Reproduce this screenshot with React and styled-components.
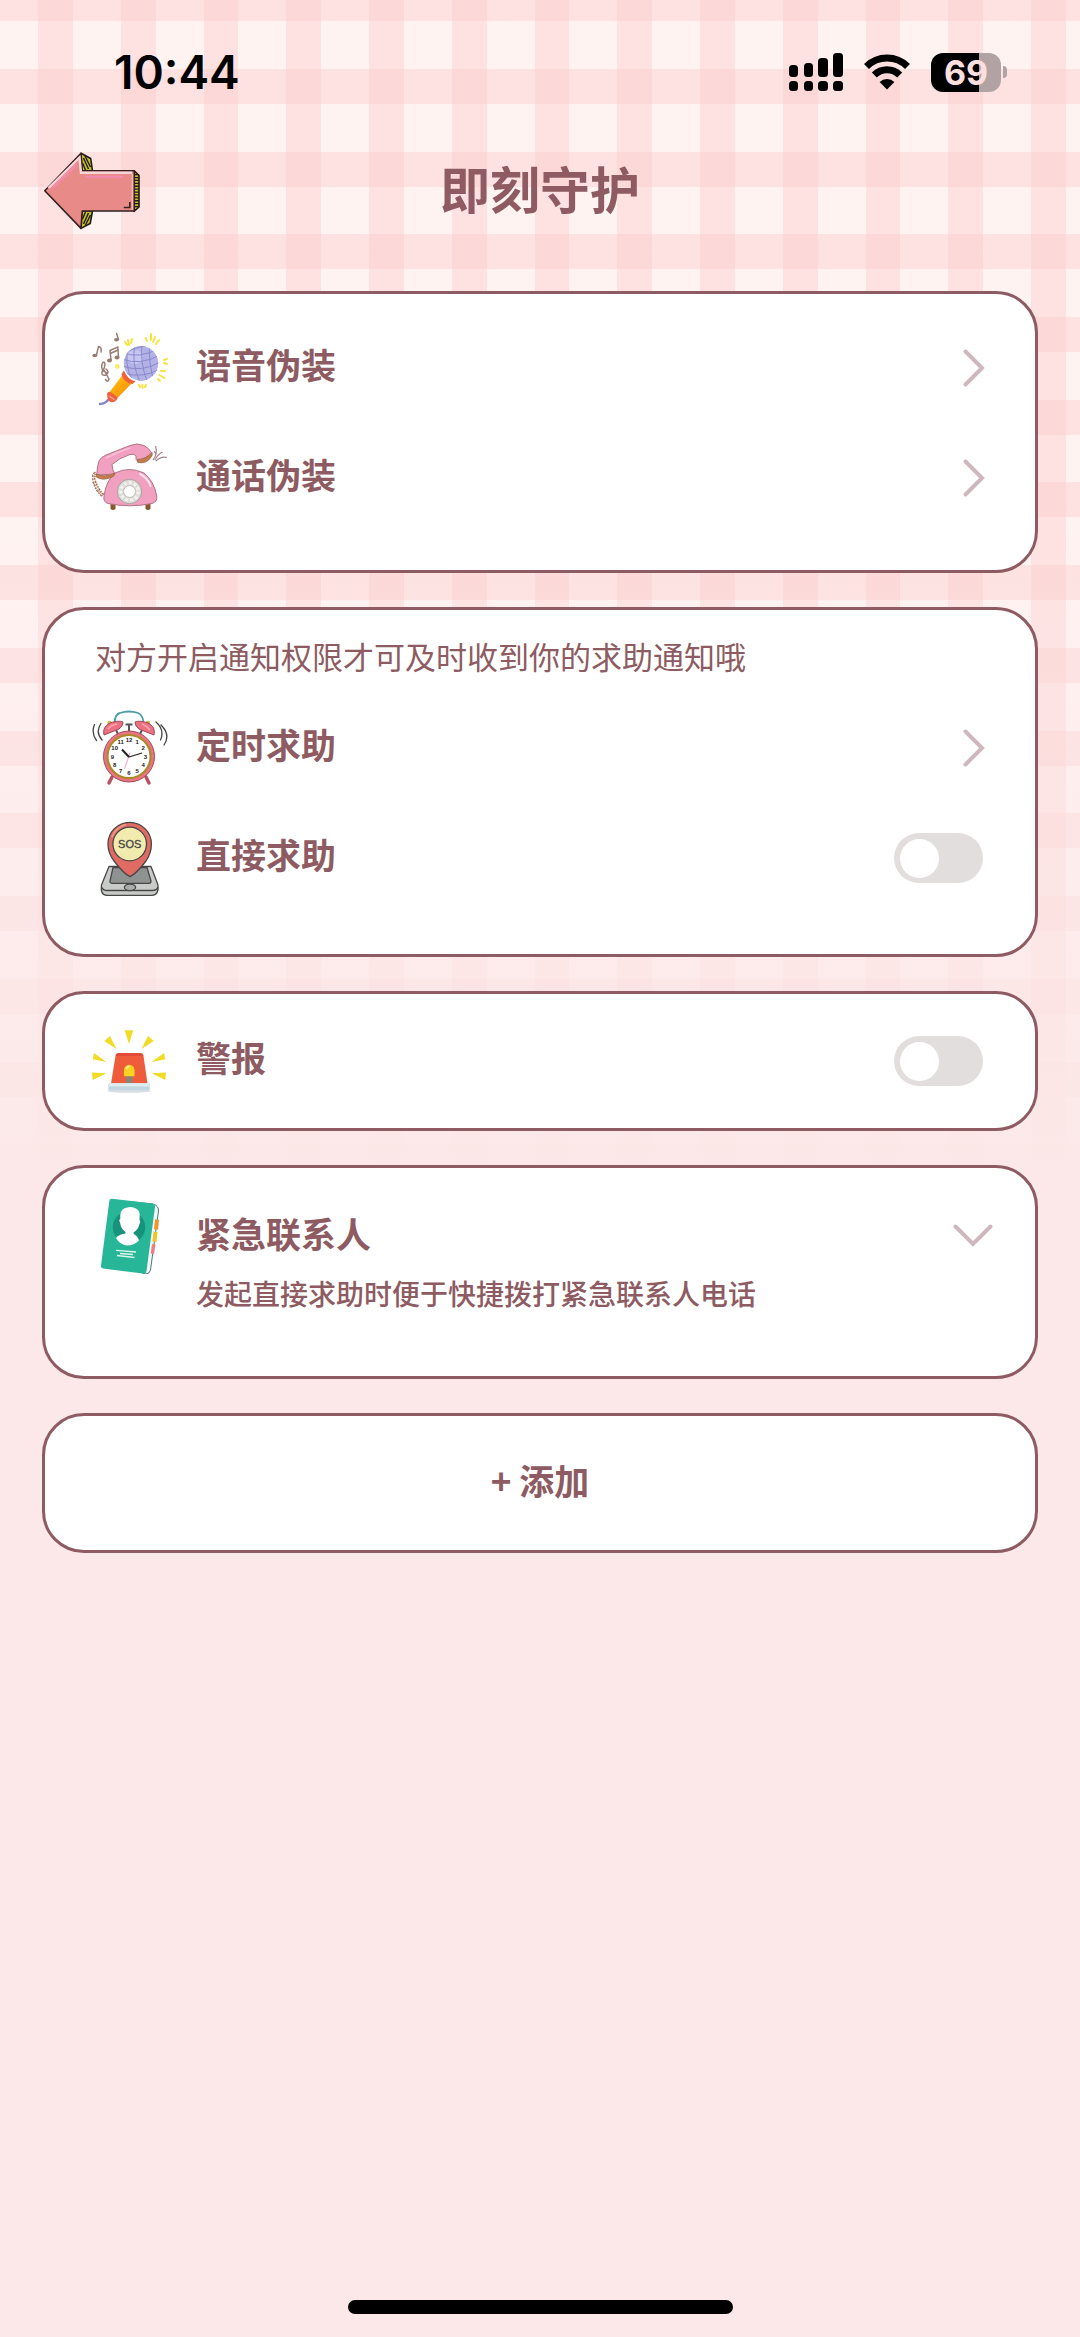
import { useState } from "react"
import styled, { createGlobalStyle, css } from "styled-components"

export default function Guard() {

    const [sos, setSos] = useState(false)
    const [alarm, setAlarm] = useState(false)

    return (
        <Page>
            <GlobalStyle />
            <StatusBar>
                <Time>10:44</Time>
                <StatusIcons>
                    <SignalIcon />
                    <WifiIcon />
                    <Battery>
                        <Level>69</Level>
                        <Nub />
                    </Battery>
                </StatusIcons>
            </StatusBar>
            <Header>
                <Back type="button" aria-label="返回"><ArrowIcon /></Back>
                <Title>即刻守护</Title>
            </Header>
            <Main>
                <Card>
                    <RowLink href="#voice">
                        <MicIcon />
                        <Name>语音伪装</Name>
                        <ChevronRight />
                    </RowLink>
                    <RowLink href="#call">
                        <PhoneIcon />
                        <Name>通话伪装</Name>
                        <ChevronRight />
                    </RowLink>
                </Card>
                <Card>
                    <Note>对方开启通知权限才可及时收到你的求助通知哦</Note>
                    <RowLink href="#timer">
                        <ClockIcon />
                        <Name>定时求助</Name>
                        <ChevronRight />
                    </RowLink>
                    <RowLabel>
                        <PinIcon />
                        <Name>直接求助</Name>
                        <Switch type="checkbox" checked={sos} onChange={e => setSos(e.target.checked)} />
                    </RowLabel>
                </Card>
                <Card $slim>
                    <RowLabel>
                        <SirenIcon />
                        <Name>警报</Name>
                        <Switch type="checkbox" checked={alarm} onChange={e => setAlarm(e.target.checked)} />
                    </RowLabel>
                </Card>
                <Card $slim>
                    <Contacts type="button">
                        <BookIcon />
                        <ContactText>
                            <ContactName>紧急联系人</ContactName>
                            <Hint>发起直接求助时便于快捷拨打紧急联系人电话</Hint>
                        </ContactText>
                        <ChevronDown />
                    </Contacts>
                </Card>
                <Add type="button">+ 添加</Add>
            </Main>
            <HomeBar />
        </Page>
    )
}

function SignalIcon() {
    return (
        <svg width="54" height="39" viewBox="0 0 54 39">
            <rect x="0" y="12" width="9" height="12" rx="3.5" />
            <rect x="15" y="10" width="9" height="14" rx="3.5" />
            <rect x="29" y="5" width="10" height="19" rx="3.5" />
            <rect x="44" y="0" width="10" height="24" rx="3.5" />
            <rect x="0" y="28" width="9" height="10" rx="3.5" />
            <rect x="15" y="28" width="9" height="10" rx="3.5" />
            <rect x="29" y="28" width="10" height="10" rx="3.5" />
            <rect x="44" y="28" width="10" height="10" rx="3.5" />
        </svg>
    )
}

function WifiIcon() {
    return (
        <svg width="46" height="36" viewBox="0 0 46 36">
            <g fill="none" stroke="#000" strokeWidth="7">
                <path d="M2.500 12.500a29 29 0 0 1 41 0" />
                <path d="M10.300 21a18 18 0 0 1 25.400 0" />
            </g>
            <path d="M15.600 28a10.500 10.500 0 0 1 14.800 0L23 35.600z" />
        </svg>
    )
}

function ArrowIcon() {
    return (
        <svg width="96" height="78" viewBox="0 0 96 78">
            <g fill="#c5c12c" stroke="#211a12" strokeWidth="1.6" strokeLinejoin="round">
                <path d="M37 1.3L46.7 6.5L48.5 19H38z" />
                <path d="M37 76.4L46.2 71.5L48.5 59H38z" />
                <path d="M90 18.7L95 23.5V55L90 59.3z" />
            </g>
            <path d="M39.5 6l5 11M41 4l5.5 11M38.5 11l3 7M39.5 72l5-11M41.5 73l5-10M38.5 67l3-7" stroke="#211a12" strokeWidth="1.4" />
            <path d="M92.6 22v34" stroke="#211a12" strokeWidth="5" strokeDasharray="1.3 1.6" />
            <path d="M.8 38.7L37 1.3L38.2 18.7H90.3V59H38.2L37 76.4z" fill="#e88b88" stroke="#33201f" strokeWidth="1.6" strokeLinejoin="round" />
            <path d="M4.5 36L35.5 5.5L37 20.8H88" fill="none" stroke="#f6d5d8" strokeWidth="2.4" />
            <path d="M9 35.5L32 13M43 24.7H78" fill="none" stroke="#f58bb5" strokeWidth="2" strokeLinecap="round" />
            <path d="M85.8 50v5.5h-6" fill="none" stroke="#33201f" strokeWidth="1.6" />
            <path d="M88.4 22v36" stroke="#f3b7b7" strokeWidth="1.4" />
        </svg>
    )
}

function MicIcon() {
    return (
        <svg width="76" height="76" viewBox="0 0 76 76">
            <defs>
                <linearGradient id="grip" x1="0" y1="0" x2="1" y2="1">
                    <stop offset="0.2" stopColor="#ffb90c" />
                    <stop offset="0.8" stopColor="#f9920b" />
                </linearGradient>
                <clipPath id="ball"><circle cx="49" cy="33.3" r="17.2" /></clipPath>
            </defs>
            <path d="M8 74q5 0 9-5" fill="none" stroke="#8484cc" strokeWidth="2.4" strokeLinecap="round" />
            <path d="M30.5 45L16.5 63.5L24 69.5L41 52z" fill="url(#grip)" />
            <path d="M15.3 66c-1-4 2-5 4-3.500l6 4.500c1 2-2 5-5 5.300c-3 0-5-3-5-6.300z" fill="#ef6040" />
            <path d="M18 66.500l4 3" stroke="#ffa48c" strokeWidth="1.500" strokeLinecap="round" />
            <path d="M32 40.500Q35 49 43.500 51.500L40.500 54Q31 52 29.500 44z" fill="#f0613b" />
            <circle cx="49" cy="33.3" r="17.2" fill="#b3b2e6" />
            <ellipse cx="43" cy="27" rx="8" ry="7" fill="#c6c6f1" />
            <g clipPath="url(#ball)" fill="none" stroke="#8b89ca" strokeWidth="1">
                <path d="M30 22Q46 30 68 18M30 29Q48 36 68 25M30 36Q50 43 68 32M32 43Q50 49 68 39M38 50Q52 53 66 46" />
                <path d="M37 15Q31 33 41 52M43 14Q39 33 48 52M50 14Q48 33 55 51M57 14Q57 33 61 50M34 22Q50 14 66 16" />
            </g>
            <g fill="none" stroke="#967d70" strokeWidth="1.500" strokeLinecap="round">
                <path d="M4.500 25L6.500 16.500Q10 17 9 22" />
                <path d="M19 30L18 20.500L25.800 17L26.500 27M18.300 23.500L26 20" />
                <path d="M24.600 3.500L26.500 9.500" />
                <path d="M15.500 43Q8 41 10 34Q12 30 13 34Q13 38 10 42Q9 46 14 45Q18 42 14 39M12 40L17 49Q16 53 13.500 49.500" />
            </g>
            <g fill="#967d70">
                <ellipse cx="2.800" cy="25.500" rx="2.500" ry="1.800" />
                <ellipse cx="17.500" cy="30.500" rx="2.500" ry="1.900" />
                <ellipse cx="25" cy="27.500" rx="2.500" ry="1.900" />
                <ellipse cx="24.500" cy="9.800" rx="2.500" ry="1.800" />
            </g>
            <g stroke="#f8e23c" strokeWidth="2" strokeLinecap="round">
                <path d="M33 12l2 3M36 10l1 5M40 9l-1 4M54 8l1 3M59 4l0 6M63 7l-2 5M67 10l-3 4M72 30l3-1M72 33l3 1M69 41l4 0M67.500 45l5 3M66 49l2 2M47 55l1 2M50.500 55v3M54 55l-1 2" />
            </g>
            <circle cx="25.300" cy="36.500" r="1.800" fill="#fff37b" stroke="#f8e23c" strokeWidth="1" />
        </svg>
    )
}

function PhoneIcon() {
    return (
        <svg width="76" height="76" viewBox="0 0 76 76">
            <path d="M4 33Q0 36 2 41T5 48T11 56" fill="none" stroke="#9d6d55" strokeWidth="4" strokeDasharray="2 1" />
            <path d="M4 33Q0 36 2 41T5 48T11 56" fill="none" stroke="#e9cdbd" strokeWidth="1.500" strokeDasharray="1.500 1.500" />
            <path d="M18.500 64h5v5q-2.500 2-5 0zM53.500 63h5v6q-2.500 2-5 0z" fill="#8c572f" />
            <path d="M23 33Q37 26 52 33Q62 41 64.800 56Q65.500 62 60 63.500Q38 68 16 63.500Q11 62 12 56Q14 41 23 33z" fill="#f1a0c0" stroke="#b27383" strokeWidth="1" />
            <path d="M48 34Q56 38 58.500 46" fill="none" stroke="#fde3ee" strokeWidth="2" strokeLinecap="round" />
            <circle cx="37.500" cy="51.500" r="12.200" fill="#dcdbd8" stroke="#a9a3a3" strokeWidth="1" />
            <circle cx="37.500" cy="51.500" r="8.700" fill="none" stroke="#f2f2f0" strokeWidth="3.200" strokeDasharray="3 2" />
            <circle cx="37.500" cy="51.500" r="6" fill="#fff" stroke="#c0bcba" strokeWidth="1" />
            <path d="M4.800 35Q5 26 7 21Q9 17 14 15L38 5.500Q45 2.500 52 5.500Q57 8 60 13.500L46.500 22Q43 20 44 16Q43 13.500 38 14.500Q27 18 20 24.500Q20 29 22.800 34z" fill="#f1a0c0" stroke="#b27383" strokeWidth="1" />
            <path d="M4.500 34Q13 38 23 33Q23 36 19 37.500Q10 41 4.300 37z" fill="#c47c4d" stroke="#9c6547" strokeWidth=".8" />
            <path d="M60 12.500Q61 15 58.500 18Q54 24 46 22.500Q45 21 45.500 19.500Q55 19 60 12.500z" fill="#c47c4d" stroke="#9c6547" strokeWidth=".8" />
            <path d="M14 18Q25 12 38 8" stroke="#f8c1d7" strokeWidth="1.500" fill="none" />
            <path d="M61 20Q66 14 63.500 6M63 20Q66 14 70.500 12M64 21Q69 16 75 17.500M64 14l-2-3" fill="none" stroke="#a6848d" strokeWidth="1.200" />
        </svg>
    )
}

// one entry per hour, starting at 12
const hours = [12, 1, 2, 3, 4, 5, 6, 7, 8, 9, 10, 11]

function ClockIcon() {
    return (
        <svg width="76" height="76" viewBox="0 0 76 76">
            <path d="M22.500 13Q23 4 28 3Q37 0 46 3Q51 5 51.500 13" fill="none" stroke="#4b9da6" strokeWidth="1.800" />
            <path d="M20 67l-3 6M54 67l3 6" stroke="#b55363" strokeWidth="3.500" strokeLinecap="round" />
            <path d="M33.500 14.500h7M37 15v7M24 20l2 4M50 20l-2 4" stroke="#555" strokeWidth="2" />
            <circle cx="17.500" cy="13" r="2.200" fill="#c6b63e" />
            <circle cx="56" cy="13" r="2.200" fill="#c6b63e" />
            <path d="M12 25Q10 17 18 13Q26 10 31 12Q31 16 27 19z" fill="#ee7182" stroke="#9f4756" strokeWidth="1" />
            <path d="M62 25Q64 17 56 13Q48 10 43 12Q43 16 47 19z" fill="#ee7182" stroke="#9f4756" strokeWidth="1" />
            <path d="M16 19Q19 15 25 14M50 14Q55 16 58 20" fill="none" stroke="#f9a3ad" strokeWidth="1.500" />
            <circle cx="37" cy="46.500" r="25.500" fill="#e87580" stroke="#a54b58" strokeWidth="1" />
            <circle cx="37" cy="46.500" r="21.500" fill="#fff" stroke="#a98a26" strokeWidth="2" />
            <ClockNumbers>
                {hours.map((hour, i) => (
                    <text
                        key={hour}
                        x={37 + 16.5 * Math.sin(i * Math.PI / 6)}
                        y={48.5 - 16.5 * Math.cos(i * Math.PI / 6)}
                    >{hour}</text>
                ))}
            </ClockNumbers>
            <path d="M38 43L32.500 59" stroke="#f5a2bf" strokeWidth="1" />
            <path d="M37 47L30 39.500" stroke="#222" strokeWidth="2" />
            <path d="M37 47L50 43" stroke="#222" strokeWidth="1.200" />
            <g fill="none" stroke="#444" strokeWidth="1.300" strokeLinecap="round">
                <path d="M2.500 14.500Q-1 23 4.500 30.500M9 13.500Q3 22 10 30" />
                <path d="M64 12Q73 20 68.500 30M69 15Q79 25 72 35" />
            </g>
        </svg>
    )
}

function PinIcon() {
    return (
        <svg width="76" height="76" viewBox="0 0 76 76">
            <g stroke="#474747" strokeWidth="1.300" strokeLinejoin="round">
                <path d="M17 46.500H59L66 65Q67 75 60 75.300H15Q8 75 9.500 65z" fill="#c9cbc9" />
                <path d="M21 47.500H55L59 61Q59 63.300 57 63.300H20Q17.500 63 18 61z" fill="#8e9290" />
                <path d="M9.500 67Q11 70.500 15 70.500H60Q65 70.500 66 67" fill="none" />
                <ellipse cx="38" cy="67.300" rx="5.600" ry="3.300" fill="#aaadab" />
                <path d="M38 56.700Q32 54 22 41Q16 33 16 24A21.700 21.700 0 0 1 59.400 24Q59.400 33 54 41Q44 54 38 56.700z" fill="#e16b62" />
                <circle cx="37.700" cy="24" r="16.800" fill="#f1ebad" />
            </g>
            <path d="M20 17Q24 7 34 4.500" fill="none" stroke="#f09a8f" strokeWidth="1.500" />
            <SosText x="37.7" y="28">SOS</SosText>
        </svg>
    )
}

function SirenIcon() {
    return (
        <svg width="76" height="76" viewBox="0 0 76 76">
            <g fill="#f1db25">
                <path d="M32.700 7.300h8.600L37 21zM12.300 18L18 13L24.500 26zM61.700 18L56 13L49.500 26z" />
                <path d="M2 30L.7 36.300L14.500 39zM72 30L73.300 36.300L59.500 39zM0 49.500L.7 57L14.500 50.300zM74 49.500L73.300 57L59.500 50.300z" />
            </g>
            <ellipse cx="37" cy="68" rx="22" ry="1.800" fill="#d9dfe2" />
            <path d="M27.500 30H47.500Q51 30 51.500 33L55.500 60.500H19L23.500 33Q24 30 27.500 30z" fill="#ee5c3c" />
            <path d="M27.500 30H47.500Q51 30 51.500 33H23.500Q24 30 27.500 30z" fill="#e04c38" />
            <rect x="34" y="52" width="6.500" height="8.500" fill="#8b8377" />
            <path d="M32 53.300V47a5 5 0 0 1 10.500 0v6.300z" fill="#f8d421" />
            <path d="M34.500 46a3 3 0 0 1 3-2.500" stroke="#fff3a8" strokeWidth="1.300" fill="none" />
            <rect x="16.300" y="60.300" width="41.400" height="7" rx="1" fill="#c2d7e0" />
            <rect x="17" y="60.300" width="40" height="3" fill="#e1edf1" />
        </svg>
    )
}

function BookIcon() {
    return (
        <svg width="76" height="76" viewBox="0 0 76 76">
            <path d="M20 2L61 6Q67 8 66.500 13L58.500 72Q57.500 76 54 76L50 75z" fill="#f4f7f6" stroke="#3f7f73" strokeWidth="1" />
            <path d="M63 21.300l4 .5l-1 10l-4-.5z" fill="#f0952a" />
            <path d="M61.500 33.500l4 .5l-1 10l-4-.5z" fill="#f3c423" />
            <path d="M60 46l3.500 .5l-1.500 9.500l-3.300-.5z" fill="#ef7d86" />
            <path d="M20 .8L60.500 5.500Q63.500 6 63 9L54.500 73Q54 76 51 75.600L11 70.600Q8.500 70 9 67.500L17.300 3Q17.600 .6 20 .8z" fill="#27b698" />
            <circle cx="37" cy="29.300" r="16.200" fill="#18937b" />
            <path d="M38 9Q46 9.500 47.500 15Q48 18 47.500 22Q49 23 47.500 26Q46 32 41.500 34.500V38H33.500V34Q29 31 28 24.500Q26.500 22 28.300 21Q27.500 12 33 10z" fill="#fff" />
            <path d="M24 40Q27 36 34 35.500H41Q46 38 47 42.500Q42 47.500 35 47.500Q28 47 24 40z" fill="#fff" />
            <path d="M24 52.300L44 54M28 55.500L41 56.500M25 57.500L42.500 59.500" stroke="#dff5ef" strokeWidth="1.300" />
        </svg>
    )
}

function ChevronRight() {
    return (
        <Chevron viewBox="0 0 40 40">
            <path d="M12.500 3.500L29 20L12.500 36.500" />
        </Chevron>
    )
}

function ChevronDown() {
    return (
        <Chevron viewBox="0 0 40 40">
            <path d="M2.500 10.500L20 28L37.500 10.500" />
        </Chevron>
    )
}

const ink = "#8d5b61"

const GlobalStyle = createGlobalStyle`
    *{
        box-sizing: border-box;
    }
    body{
        margin: 0;
        background-color: #fce8e8;
        color: ${ink};
        font-family: 'Noto Sans CJK SC', sans-serif;
    }
    button{
        font-family: inherit;
        color: inherit;
        cursor: pointer;
    }
    svg{
        flex-shrink: 0;
        display: block;
    }
`
const Page = styled.div`
    min-height: 100vh;
    display: flex;
    flex-direction: column;
    background:
        linear-gradient(transparent 500px, #fce8e8 1170px),
        repeating-linear-gradient(90deg, transparent 0 3.54vw, #fbc8c866 3.54vw 6.76vw, transparent 6.76vw 7.66vw),
        repeating-linear-gradient(#fbc8c866 0 1.95vw, transparent 1.95vw 6.37vw, #fbc8c866 6.37vw 7.66vw),
        #fff3f2;
`
const StatusBar = styled.div`
    height: 144px;
    padding: 0 73px 0 114px;
    display: flex;
    align-items: center;
    justify-content: space-between;
    color: #000;
    font-family: Inter, sans-serif;
`
const Time = styled.span`
    font-size: 46px;
    font-weight: 600;
`
const StatusIcons = styled.div`
    display: flex;
    align-items: center;
    gap: 21px;
`
const Battery = styled.div`
    display: flex;
    align-items: center;
    gap: 2px;
`
const Level = styled.span`
    width: 70px;
    height: 39px;
    border-radius: 12px;
    background: linear-gradient(90deg, #000 69%, #b1a3a3 69%);
    color: #fddfdf;
    font-size: 34px;
    font-weight: 700;
    line-height: 39px;
    text-align: center;
`
const Nub = styled.span`
    width: 4px;
    height: 12px;
    border-radius: 0 6px 6px 0;
    background-color: #b1a3a3;
`
const Header = styled.header`
    height: 94px;
    padding: 0 44px;
    display: grid;
    grid-template-columns: 96px 1fr 96px;
    align-items: center;
`
const Back = styled.button`
    padding: 0;
    border: none;
    background: none;
`
const Title = styled.h1`
    margin: 0;
    padding-bottom: 8px;
    font-size: 50px;
    font-weight: 700;
    line-height: 72px;
    text-align: center;
`
const Main = styled.main`
    padding: 53px 42px 34px;
    display: flex;
    flex-direction: column;
    gap: 34px;
`
const box = css`
    border: 3px solid ${ink};
    border-radius: 42px;
    background-color: #fff;
`
const Card = styled.section`
    ${box}
    padding: ${props => props.$slim ? "12px 42px 12px 47px" : "19px 42px 37px 47px"};
`
const row = css`
    height: 110px;
    display: flex;
    align-items: center;
    gap: 28px;
    color: inherit;
    text-decoration: none;
    cursor: pointer;
`
const RowLink = styled.a`
    ${row}
`
const RowLabel = styled.label`
    ${row}
`
const Name = styled.span`
    flex: 1;
    padding-bottom: 8px;
    font-size: 35px;
    font-weight: 700;
    line-height: 50px;
`
const Note = styled.p`
    margin: 0;
    padding: 2px 0 12px 3px;
    font-size: 31px;
    font-weight: 400;
    line-height: 50px;
    & ~ ${RowLabel}{
        margin-bottom: 4px;
    }
`
const Chevron = styled.svg`
    width: 40px;
    height: 40px;
    fill: none;
    stroke: #ceb8be;
    stroke-width: 4px;
    stroke-linecap: round;
`
const Switch = styled.input`
    appearance: none;
    width: 89px;
    height: 50px;
    margin: 0 10px 0 0;
    padding: 0 6px;
    display: flex;
    align-items: center;
    border-radius: 25px;
    background-color: #e2dede;
    cursor: pointer;
    &::before{
        content: "";
        width: 39px;
        height: 39px;
        border-radius: 50%;
        background-color: #fff;
    }
    &:checked{
        justify-content: flex-end;
        background-color: #e88b88;
    }
`
const Contacts = styled.button`
    width: 100%;
    padding: 18px 0 46px;
    display: flex;
    align-items: flex-start;
    gap: 28px;
    border: none;
    background: none;
    text-align: left;
    ${Chevron}{
        margin-top: 18px;
    }
`
const ContactText = styled.span`
    flex: 1;
    display: flex;
    flex-direction: column;
`
const ContactName = styled.span`
    font-size: 35px;
    font-weight: 700;
    line-height: 70px;
`
const Hint = styled.span`
    font-size: 28px;
    font-weight: 500;
    line-height: 50px;
`
const Add = styled.button`
    ${box}
    height: 140px;
    padding: 0 0 8px;
    font-size: 35px;
    font-weight: 700;
`
const ClockNumbers = styled.g`
    font-family: 'Liberation Sans', sans-serif;
    font-size: 6px;
    font-weight: 700;
    text-anchor: middle;
    fill: #222;
`
const SosText = styled.text`
    font-family: 'Liberation Sans', sans-serif;
    font-size: 11px;
    text-anchor: middle;
    fill: #444;
    stroke: #444;
    stroke-width: .3px;
`
const HomeBar = styled.div`
    width: 385px;
    height: 14px;
    margin: auto auto 23px;
    border-radius: 7px;
    background-color: #000;
`
